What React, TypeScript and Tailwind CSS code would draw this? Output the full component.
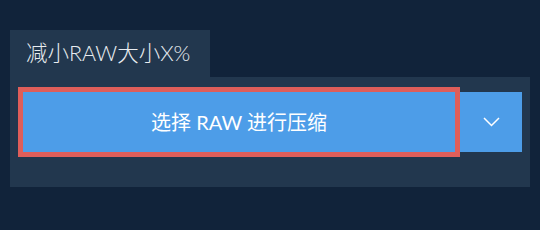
export default function App() {
  return (
    <div
      className="h-[230px] w-[540px] bg-[#11233a] pt-[30px] pl-[10px]"
      style={{ fontFamily: "Lato, 'Noto Sans CJK SC', sans-serif" }}
    >
      {/* Tab label */}
      <div className="flex h-[47px] w-[200px] items-center bg-[#22374e] pl-[16px] text-[21.5px] font-light text-[#e8ecf0]">
        减小RAW大小X%
      </div>

      {/* Panel */}
      <div className="h-[110px] w-[520px] bg-[#22374e] pt-[15px] pl-[13px]">
        <div className="flex h-[60px]">
          <button className="relative z-10 flex w-[432px] items-center justify-center bg-[#4d9de8] text-[20px] text-white outline-[5px] outline-solid outline-[#df5e5a]">
            选择 RAW 进行压缩
          </button>
          <button className="flex w-[67px] items-center justify-center bg-[#4d9de8] pl-[5px]">
            <svg width="17" height="10" viewBox="0 0 17 10" fill="none">
              <path d="M1 1 L8.5 8.5 L16 1" stroke="white" strokeWidth="1.5" />
            </svg>
          </button>
        </div>
      </div>
    </div>
  );
}
